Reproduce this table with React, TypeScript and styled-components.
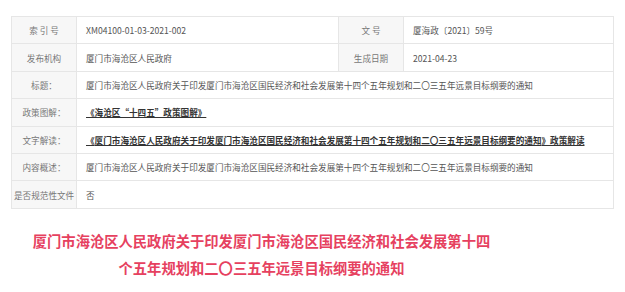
import styled, { createGlobalStyle } from 'styled-components'

const GlobalStyle = createGlobalStyle`
    body {
        margin : 0;
        background : #fff;
        font-family : "Noto Sans CJK SC", "Noto Sans", sans-serif;
    }
`

const title = '厦门市海沧区人民政府关于印发厦门市海沧区国民经济和社会发展第十四个五年规划和二〇三五年远景目标纲要的通知'

interface CellProps {
    $label? : boolean
}

export const App = () => {
    return (
        <Page>
            <GlobalStyle />
            <InfoTable>
                <colgroup>
                    <col style={{ width: 65 }} />
                    <col style={{ width: 262 }} />
                    <col style={{ width: 65 }} />
                    <col style={{ width: 210 }} />
                </colgroup>
                <tbody>
                    <tr>
                        <Cell $label>索 引 号</Cell>
                        <Cell>XM04100-01-03-2021-002</Cell>
                        <Cell $label>文 号</Cell>
                        <Cell>厦海政〔2021〕59号</Cell>
                    </tr>
                    <tr>
                        <Cell $label>发布机构</Cell>
                        <Cell>厦门市海沧区人民政府</Cell>
                        <Cell $label>生成日期</Cell>
                        <Cell>2021-04-23</Cell>
                    </tr>
                    <tr>
                        <Cell $label>标题：</Cell>
                        <Cell colSpan={3}>{title}</Cell>
                    </tr>
                    <tr>
                        <Cell $label>政策图解：</Cell>
                        <Cell colSpan={3}><DocLink href="#">《海沧区“十四五”政策图解》</DocLink></Cell>
                    </tr>
                    <tr>
                        <Cell $label>文字解读：</Cell>
                        <Cell colSpan={3}><DocLink href="#">《{title}》政策解读</DocLink></Cell>
                    </tr>
                    <tr>
                        <Cell $label>内容概述：</Cell>
                        <Cell colSpan={3}>{title}</Cell>
                    </tr>
                    <tr>
                        <Cell $label>是否规范性文件</Cell>
                        <Cell colSpan={3}>否</Cell>
                    </tr>
                </tbody>
            </InfoTable>
            <Heading>{title}</Heading>
        </Page>
    )
}

// styled-component
const Page = styled.div`
    width : 625px;
    padding : 16px 0 0 11px;
    box-sizing : border-box;
`

const InfoTable = styled.table`
    width : 603px;
    table-layout : fixed;
    border-collapse : collapse;
    border : 1px solid #e6e6e6;
`

const Cell = styled.td<CellProps>`
    height : 26.4px;
    padding : ${p => p.$label ? '0 2px' : '0 0 0 9px'};
    border : 1px solid #e6e6e6;
    background : ${p => p.$label ? '#f7f7f7' : '#fff'};
    text-align : ${p => p.$label ? 'center' : 'left'};
    color : ${p => p.$label ? '#777' : '#555'};
    font-size : 8.6px;
    white-space : nowrap;
    overflow : hidden;
`

const DocLink = styled.a`
    color : #333;
    font-weight : bold;
    text-decoration : underline;
`

const Heading = styled.h1`
    width : 471px;
    margin : 18px 0 0 15px;
    text-align : center;
    color : #e6415f;
    font-size : 14.3px;
    font-weight : bold;
    line-height : 27px;
`

export default App
